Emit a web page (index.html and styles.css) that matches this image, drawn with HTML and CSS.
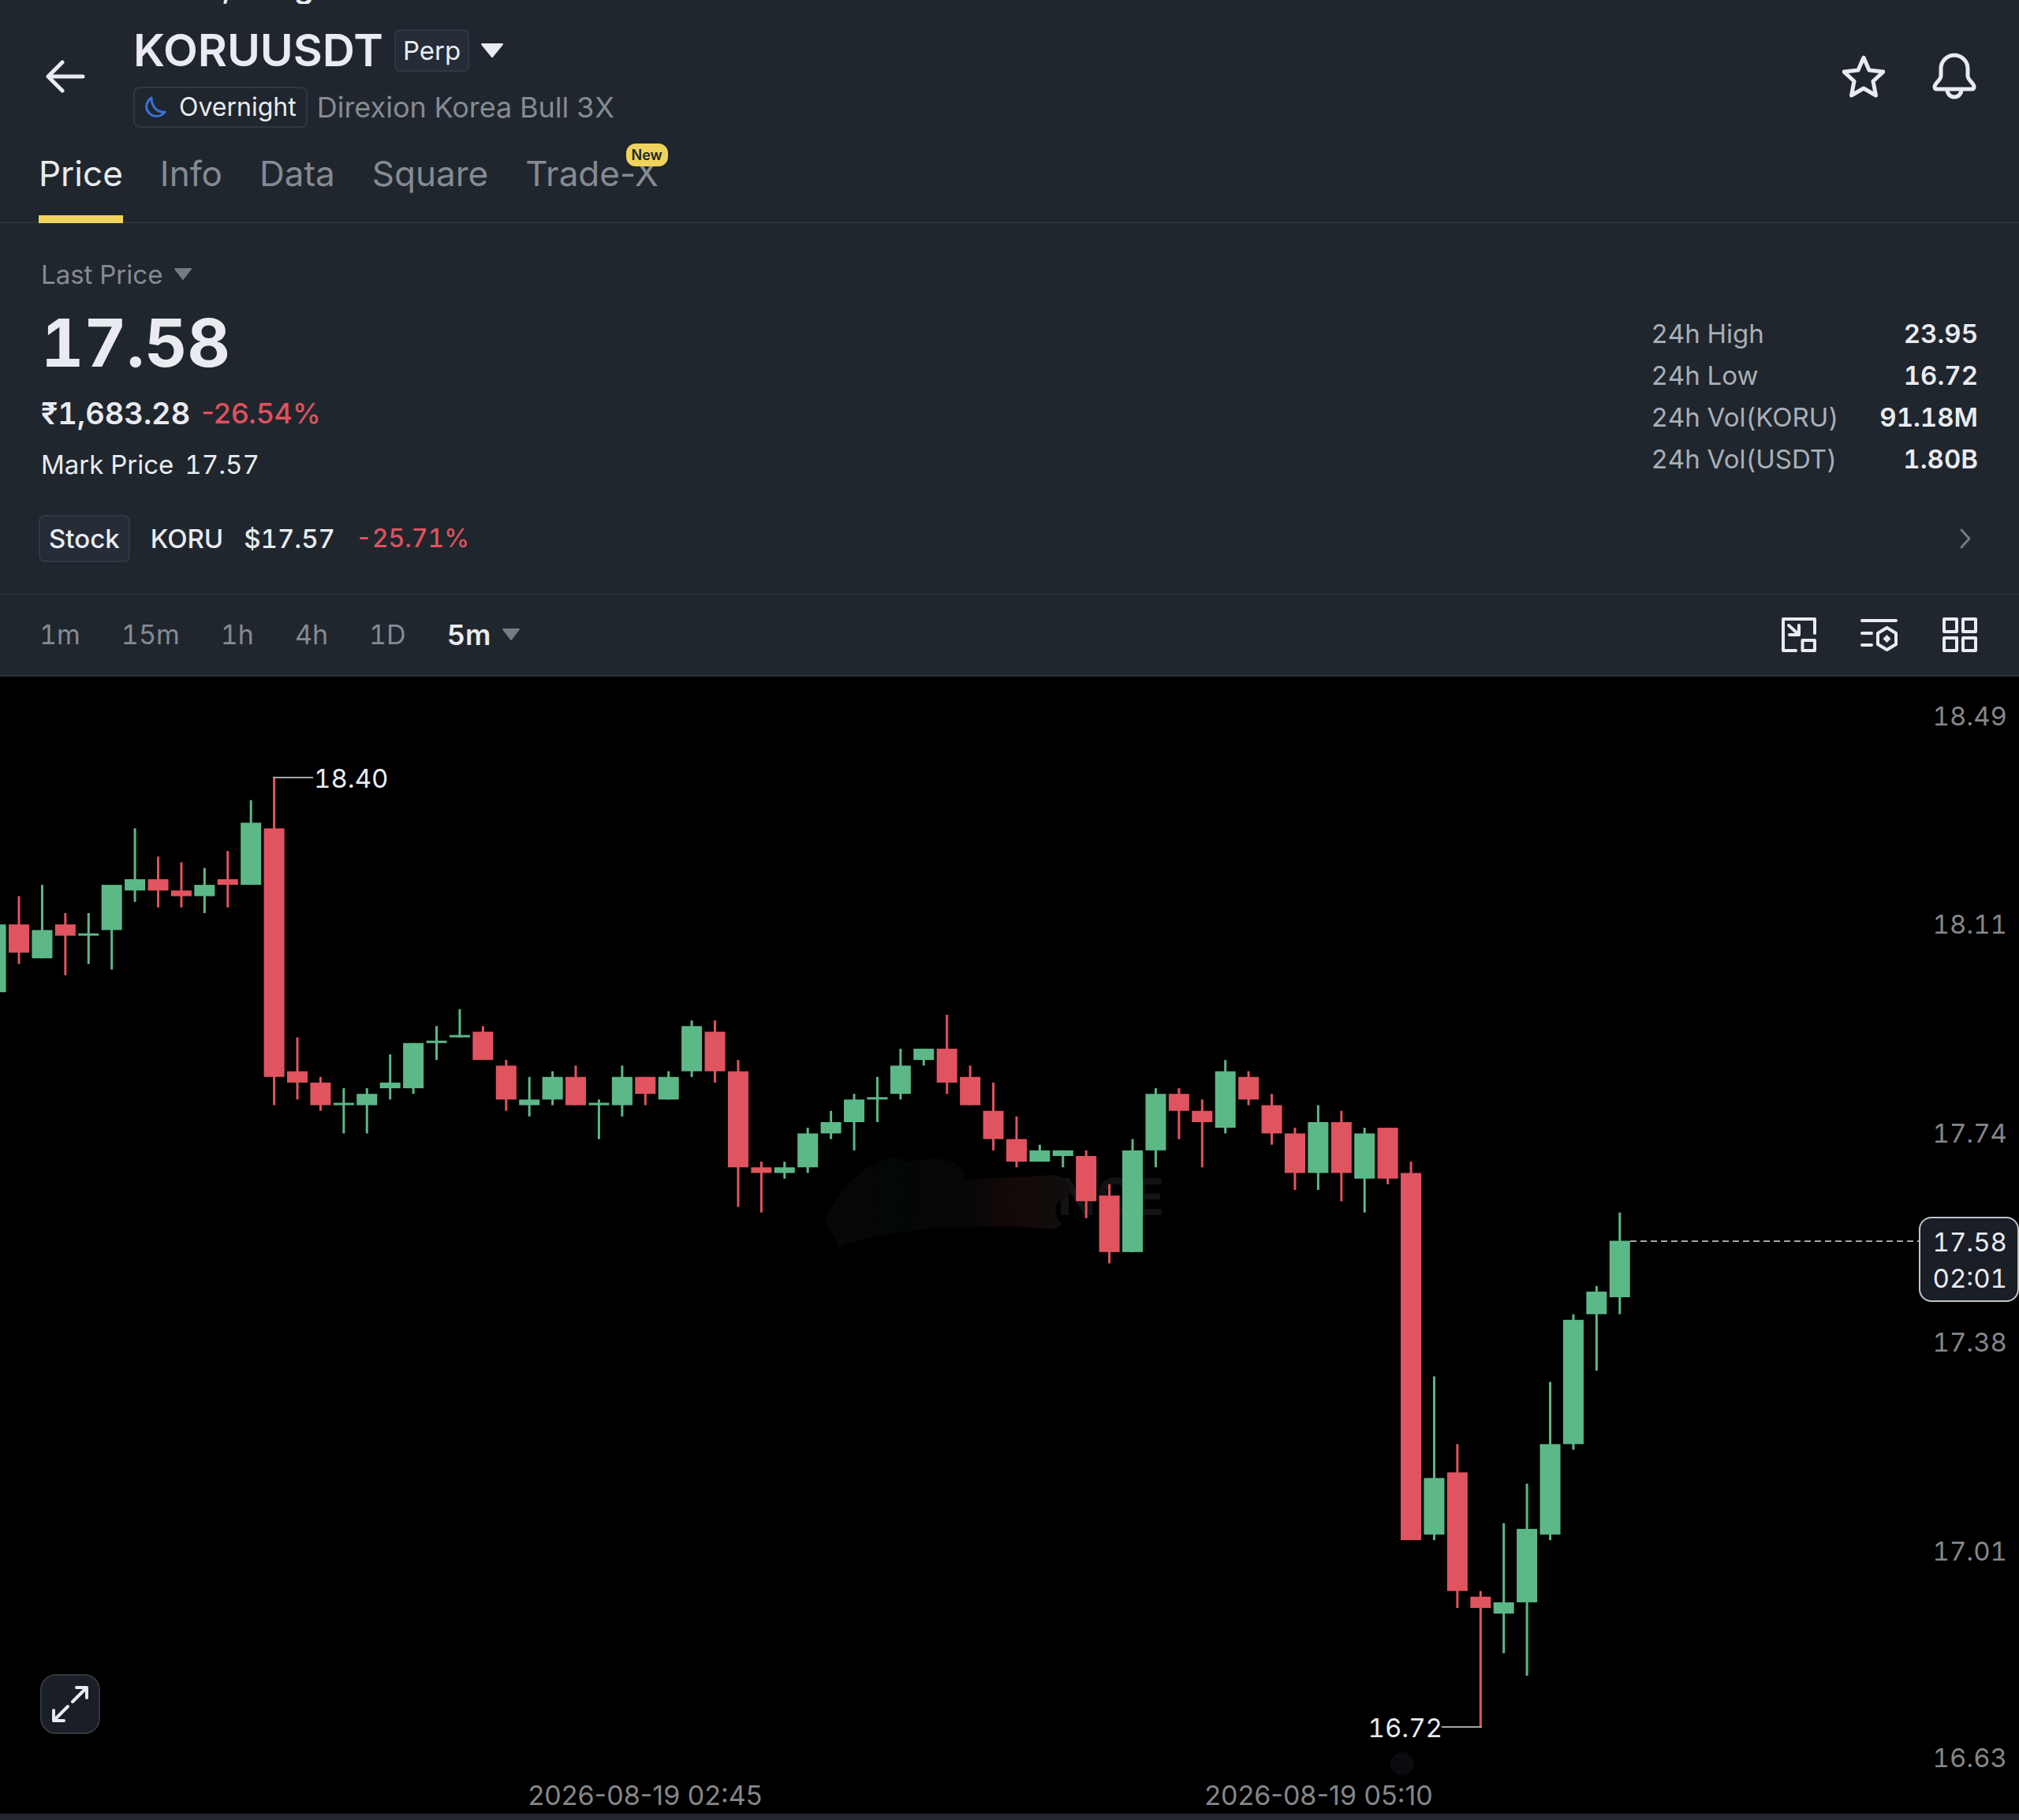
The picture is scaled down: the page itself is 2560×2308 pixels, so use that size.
FILE: index.html
```html
<!DOCTYPE html>
<html lang="en">
<head>
    <meta charset="UTF-8">
    <meta name="viewport" content="width=device-width, initial-scale=1.0">
    <title>KORUUSDT Perp</title>
    <link rel="stylesheet" href="styles.css">
</head>
<body>

    <div class="ticker"><span>,</span><span>g</span></div>

    <header class="header">
        <button class="icon-btn back" aria-label="Back">
            <svg width="50" height="42" viewBox="0 0 50 42"><path d="M47 21H4M21 3L3 21l18 18"/></svg>
        </button>
        <div class="pair">
            <div class="pair-row">
                <h1>KORUUSDT</h1>
                <span class="badge">Perp</span>
                <button class="icon-btn" aria-label="Choose pair">
                    <svg class="caret" width="30" height="20" viewBox="0 0 30 20"><path d="M2 2h26L15 18z"/></svg>
                </button>
            </div>
            <div class="pair-sub">
                <span class="session">
                    <svg width="28" height="28" viewBox="0 0 28 28"><path d="M9 2C3 6 0 15 6 21c5 6 15 6 20-1C17 21 9 14 9 2z"/></svg>
                    Overnight
                </span>
                <span class="pair-name">Direxion Korea Bull 3X</span>
            </div>
        </div>
        <div class="actions">
            <button class="icon-btn" aria-label="Favorite">
                <svg width="54" height="56" viewBox="0 0 54 56"><path d="M27 4l7 16 18 2-13 12 3.500 18L27 43l-15.500 9L15 34 2 22l18-2z"/></svg>
            </button>
            <button class="icon-btn" aria-label="Alerts">
                <svg width="56" height="60" viewBox="0 0 56 60"><path d="M11 20a17 17 0 0 1 34 0v9c0 6 8 9 8 14 0 2-1 3-3 3H6c-2 0-3-1-3-3 0-5 8-8 8-14zM19 47a9 9 0 0 0 18 0"/></svg>
            </button>
        </div>
    </header>

    <nav class="tabs">
        <a href="#" class="tab active">Price</a>
        <a href="#" class="tab">Info</a>
        <a href="#" class="tab">Data</a>
        <a href="#" class="tab">Square</a>
        <a href="#" class="tab">Trade-X<span class="new">New</span></a>
    </nav>

    <section class="summary">
        <div class="quote">
            <div class="prices">
                <button class="price-type">Last Price
                    <svg class="caret" width="24" height="18" viewBox="0 0 24 18"><path d="M2 2h20L12 15z"/></svg>
                </button>
                <div class="last">17.58</div>
                <div class="fiat">₹1,683.28 <span class="down">-26.54%</span></div>
                <div class="mark"><span>Mark Price</span><span>17.57</span></div>
            </div>
            <table class="stats">
                <tr><th scope="row">24h High</th><td>23.95</td></tr>
                <tr><th scope="row">24h Low</th><td>16.72</td></tr>
                <tr><th scope="row">24h Vol(KORU)</th><td>91.18M</td></tr>
                <tr><th scope="row">24h Vol(USDT)</th><td>1.80B</td></tr>
            </table>
        </div>
        <a href="#" class="stock">
            <span class="badge stock-badge">Stock</span>
            <span>KORU</span>
            <span>$17.57</span>
            <span class="down">-25.71%</span>
            <svg class="chevron" width="16" height="28" viewBox="0 0 16 28"><path d="M3 3l10 11L3 25"/></svg>
        </a>
    </section>

    <div class="toolbar">
        <button class="interval">1m</button>
        <button class="interval">15m</button>
        <button class="interval">1h</button>
        <button class="interval">4h</button>
        <button class="interval">1D</button>
        <button class="interval active">5m
            <svg class="caret" width="24" height="18" viewBox="0 0 24 18"><path d="M2 2h20L12 15z"/></svg>
        </button>
        <div class="tools">
            <button class="icon-btn" aria-label="Floating chart">
                <svg width="44" height="44" viewBox="0 0 44 44"><path d="M18 42H2V2h40v18M9 10l12 11M22 10v12H10M26.500 29H42v13H26.500z"/></svg>
            </button>
            <button class="icon-btn" aria-label="Indicators">
                <svg width="48" height="44" viewBox="0 0 48 44"><path d="M2 4h43M2 20h12M2 35h12M33.500 13l11.500 7v14l-11.500 7L22 34V20z"/><path class="fill" d="M33.500 22l5 5-5 5-5-5z"/></svg>
            </button>
            <button class="icon-btn" aria-label="Layout">
                <svg width="44" height="44" viewBox="0 0 44 44"><path d="M2 2h16v16H2zM26 2h16v16H26zM2 26h16v16H2zM26 26h16v16H26z"/></svg>
            </button>
        </div>
    </div>

    <main class="chart">
        <svg id="chart" viewBox="0 0 2560 1442" role="img" aria-label="KORUUSDT 5 minute candles">
            <defs>
                <linearGradient id="smudge">
                    <stop offset="0" stop-color="#080605"/>
                    <stop offset="0.25" stop-color="#040707"/>
                    <stop offset="0.55" stop-color="#060606"/>
                    <stop offset="0.75" stop-color="#130908"/>
                    <stop offset="1" stop-color="#100e0d"/>
                </linearGradient>
            </defs>
            <text class="watermark" x="1341" y="683">NCE</text>
            <path fill="url(#smudge)" d="M1046 690C1060 650 1100 615 1134 609L1150 616C1180 608 1210 610 1220 626L1226 638L1340 632C1358 640 1364 655 1350 662C1332 668 1338 685 1346 694C1344 704 1320 700 1290 697L1180 700C1130 705 1080 715 1064 724Z"/>
            <circle cx="1778" cy="1379" r="15" fill="#0b0b0f"/>
            <g id="candles"></g>
            <path class="leader" d="M346 128h51M1828 1332h51"/>
            <text class="extreme" x="398" y="141">18.40</text>
            <text class="extreme" x="1829" y="1345" text-anchor="end">16.72</text>
            <path class="current" d="M2067 716h366"/>
            <g id="axis" class="axis"></g>
            <rect class="tag" x="2434" y="686" width="125" height="106" rx="15"/>
            <text class="tag-text" x="2545" y="729">17.58</text>
            <text class="tag-text" x="2545" y="775">02:01</text>
        </svg>
        <button class="expand" aria-label="Full screen">
            <svg width="48" height="48" viewBox="0 0 48 48"><path d="M27 21L45 3M32 3h13v13M21 27L3 45M3 32v13h13"/></svg>
        </button>
    </main>

    <script>
        // [open, high, low, close] in cents, oldest first
        const candles = [
            [1802, 1814, 1802, 1814], [1814, 1819, 1807, 1809], [1808, 1821, 1808, 1813], [1814, 1816, 1805, 1812],
            [1812, 1816, 1807, 1812], [1813, 1821, 1806, 1821], [1820, 1831, 1818, 1822], [1822, 1826, 1817, 1820],
            [1820, 1825, 1817, 1819], [1819, 1824, 1816, 1821], [1822, 1827, 1817, 1821], [1821, 1836, 1821, 1832],
            [1831, 1840, 1782, 1787], [1788, 1794, 1783, 1786], [1786, 1787, 1781, 1782], [1782, 1785, 1777, 1782],
            [1782, 1785, 1777, 1784], [1785, 1791, 1783, 1786], [1785, 1793, 1784, 1793], [1793, 1796, 1790, 1793],
            [1794, 1799, 1794, 1794], [1795, 1796, 1790, 1790], [1789, 1790, 1781, 1783], [1782, 1787, 1780, 1783],
            [1783, 1788, 1782, 1787], [1787, 1789, 1782, 1782], [1782, 1783, 1776, 1782], [1782, 1789, 1780, 1787],
            [1787, 1787, 1782, 1784], [1783, 1788, 1783, 1787], [1788, 1797, 1787, 1796], [1795, 1797, 1786, 1788],
            [1788, 1790, 1764, 1771], [1771, 1772, 1763, 1770], [1770, 1772, 1769, 1771], [1771, 1778, 1770, 1777],
            [1777, 1781, 1776, 1779], [1779, 1784, 1774, 1783], [1783, 1787, 1779, 1783], [1784, 1792, 1783, 1789],
            [1790, 1792, 1789, 1792], [1792, 1798, 1784, 1786], [1787, 1789, 1782, 1782], [1781, 1786, 1774, 1776],
            [1776, 1780, 1771, 1772], [1772, 1775, 1772, 1774], [1773, 1774, 1771, 1774], [1773, 1774, 1762, 1765],
            [1766, 1768, 1754, 1756], [1756, 1776, 1756, 1774], [1774, 1785, 1771, 1784], [1784, 1785, 1776, 1781],
            [1781, 1783, 1771, 1779], [1778, 1790, 1777, 1788], [1787, 1788, 1782, 1783], [1782, 1784, 1775, 1777],
            [1777, 1778, 1767, 1770], [1770, 1782, 1767, 1779], [1779, 1781, 1765, 1770], [1769, 1778, 1763, 1777],
            [1778, 1778, 1768, 1769], [1770, 1772, 1705, 1705], [1706, 1734, 1705, 1716], [1717, 1722, 1693, 1696],
            [1695, 1696, 1672, 1693], [1692, 1708, 1685, 1694], [1694, 1715, 1681, 1707], [1706, 1733, 1705, 1722],
            [1722, 1745, 1721, 1744], [1745, 1750, 1735, 1749], [1748, 1763, 1745, 1758]
        ];
        const labels = [
            ['18.49', 62], ['18.11', 326], ['17.74', 591], ['17.38', 856], ['17.01', 1121], ['16.63', 1383]
        ];
        const times = [['2026-08-19 02:45', 818], ['2026-08-19 05:10', 1672]];

        const ns = 'http://www.w3.org/2000/svg';
        const step = 29.417;
        const bodyWidth = 26;
        const y = cents => 128 + (1840 - cents) * 7.164;

        function add(parent, tag, attrs, text) {
            const el = document.createElementNS(ns, tag);
            for (const key in attrs) el.setAttribute(key, attrs[key]);
            if (text) el.textContent = text;
            parent.appendChild(el);
        }

        const group = document.getElementById('candles');
        candles.forEach(([open, high, low, close], i) => {
            const x = i * step - 5.4;
            const cls = close >= open ? 'up' : 'fall';
            const bottom = y(Math.min(open, close));
            const height = Math.max(bottom - y(Math.max(open, close)), 3);
            add(group, 'rect', { class: cls, x: x - 1.5, y: y(high), width: 3, height: y(low) - y(high) });
            add(group, 'rect', { class: cls, x: x - bodyWidth / 2, y: bottom - height, width: bodyWidth, height: height });
        });

        const axis = document.getElementById('axis');
        labels.forEach(([text, top]) => add(axis, 'text', { x: 2545, y: top, 'text-anchor': 'end' }, text));
        times.forEach(([text, left]) => add(axis, 'text', { class: 'time', x: left, y: 1431 }, text));
    </script>

</body>
</html>
```
FILE: styles.css
```css
* {
    box-sizing: border-box;
}

body {
    margin: 0;
    background-color: #20262d;
    color: #e9ebf0;
    font-family: 'Inter', 'Noto Sans', sans-serif;
    font-size: 33px;
    font-variant-numeric: tabular-nums;
    line-height: 40px;
}

button {
    padding: 0;
    border: none;
    background: none;
    color: inherit;
    font: inherit;
    font-variant-numeric: inherit;
    cursor: pointer;
}

a {
    color: inherit;
    text-decoration: none;
}

svg {
    display: block;
}

/* Icons */
.icon-btn svg,
.expand svg {
    fill: none;
    stroke: #e9ebf0;
    stroke-width: 4;
    stroke-linecap: round;
    stroke-linejoin: round;
}

.icon-btn .fill {
    fill: #e9ebf0;
    stroke: none;
}

.icon-btn .caret {
    fill: #e9ebf0;
    stroke-width: 2;
}

.price-type .caret,
.interval .caret {
    fill: #737b85;
    stroke: #737b85;
    stroke-width: 2;
    stroke-linejoin: round;
}

/* Line scrolled out of view above the header */
.ticker {
    display: flex;
    align-items: flex-end;
    gap: 80px;
    height: 5px;
    padding-left: 282px;
    overflow: hidden;
    font-size: 40px;
    font-weight: 600;
    line-height: 44px;
}

/* Header */
.header {
    display: flex;
    align-items: center;
    padding: 27px 54px 0 58px;
}

.back svg,
.actions svg {
    stroke-width: 5;
}

.pair {
    margin-left: 61px;
}

.pair-row,
.pair-sub {
    display: flex;
    align-items: center;
}

.pair-row {
    gap: 14px;
    margin-bottom: 14px;
}

h1 {
    margin: 0;
    font-size: 57px;
    font-weight: 600;
    line-height: 64px;
}

.badge {
    padding: 5px 9px;
    border: 2px solid #323844;
    border-radius: 8px;
    background-color: #262b38;
}

.pair-sub {
    gap: 12px;
}

.session {
    display: flex;
    align-items: center;
    gap: 16px;
    padding: 4px 12px;
    border: 2px solid #323740;
    border-radius: 8px;
    font-size: 32px;
}

.session svg {
    fill: none;
    stroke: #3873d8;
    stroke-width: 3;
    stroke-linejoin: round;
}

.pair-name {
    color: #858b93;
    font-size: 36px;
}

.actions {
    display: flex;
    align-items: center;
    gap: 60px;
    margin-left: auto;
}

/* Tabs */
.tabs {
    display: flex;
    gap: 47px;
    margin-top: 32px;
    padding: 0 49px;
    box-shadow: inset 0 -2px #2d323a;
    font-variant-numeric: normal;
}

.tab {
    position: relative;
    padding-bottom: 27px;
    border-bottom: 10px solid transparent;
    color: #858b93;
    font-size: 44px;
    line-height: 52px;
}

.tab.active {
    border-color: #efd35c;
    color: #e9ebf0;
}

.new {
    position: absolute;
    top: -12px;
    right: -12px;
    padding: 0 7px;
    border-radius: 12px;
    background-color: #efd35c;
    color: #20262d;
    font-size: 18px;
    font-weight: 600;
    line-height: 29px;
}

/* Price summary */
.summary {
    padding: 45px 52px 39px 49px;
    border-bottom: 2px solid #2a2f36;
}

.quote {
    display: flex;
    align-items: flex-end;
    justify-content: space-between;
    padding-left: 3px;
}

.prices {
    display: flex;
    flex-direction: column;
    align-items: flex-start;
    gap: 23px;
}

.price-type {
    display: flex;
    align-items: center;
    gap: 14px;
    color: #858b93;
}

.last {
    font-size: 84px;
    font-weight: 700;
    line-height: 88px;
}

.fiat {
    display: flex;
    gap: 14px;
    font-size: 38px;
    font-weight: 600;
    line-height: 44px;
}

.down {
    color: #dd525e;
    font-weight: 500;
}

.fiat .down {
    font-size: 36px;
    font-variant-numeric: normal;
}

.mark {
    display: flex;
    gap: 14px;
}

.stats {
    border-collapse: collapse;
    line-height: 53px;
}

.stats th {
    padding: 0 52px 0 0;
    color: #a9afb8;
    font-weight: 400;
    text-align: left;
}

.stats td {
    padding: 0;
    font-weight: 600;
    text-align: right;
}

.stock {
    display: flex;
    align-items: center;
    gap: 26px;
    margin-top: 44px;
    font-weight: 500;
}

.stock .down {
    font-size: 32px;
}

.stock-badge {
    padding: 8px 11px;
}

.chevron {
    margin: 0 8px 0 auto;
    fill: none;
    stroke: #737b85;
    stroke-width: 3;
    stroke-linecap: round;
    stroke-linejoin: round;
}

/* Interval bar */
.toolbar {
    display: flex;
    align-items: center;
    gap: 52px;
    padding: 29px 53px 29px 50px;
    border-bottom: 2px solid #2d323a;
    font-size: 34px;
    line-height: 44px;
}

.interval {
    display: flex;
    align-items: center;
    gap: 14px;
    color: #858b93;
}

.interval.active {
    color: #e9ebf0;
    font-size: 36px;
    font-weight: 600;
}

.tools {
    display: flex;
    align-items: center;
    gap: 56px;
    margin-left: auto;
}

/* Chart */
.chart {
    position: relative;
    background-color: #000;
    border-bottom: 8px solid #22262d;
}

.chart > svg {
    width: 100%;
}

.up {
    fill: #5db888;
}

.fall {
    fill: #e0545f;
}

.axis {
    fill: #84868a;
}

.time {
    font-size: 34px;
    font-variant-numeric: normal;
    text-anchor: middle;
}

.extreme,
.tag-text {
    fill: #e9ebf0;
}

.tag-text {
    text-anchor: end;
}

.leader,
.current {
    fill: none;
    stroke: #a4a6a9;
    stroke-width: 2;
}

.current {
    stroke-dasharray: 8 5;
}

.tag {
    fill: #1a1e27;
    stroke: #c3c5c9;
    stroke-width: 2;
}

.watermark {
    fill: #111315;
    font-size: 64px;
    font-weight: 700;
}

.expand {
    position: absolute;
    bottom: 101px;
    left: 51px;
    padding: 12px;
    border: 2px solid #34373d;
    border-radius: 20px;
    background-color: #1a1e27;
}
```
